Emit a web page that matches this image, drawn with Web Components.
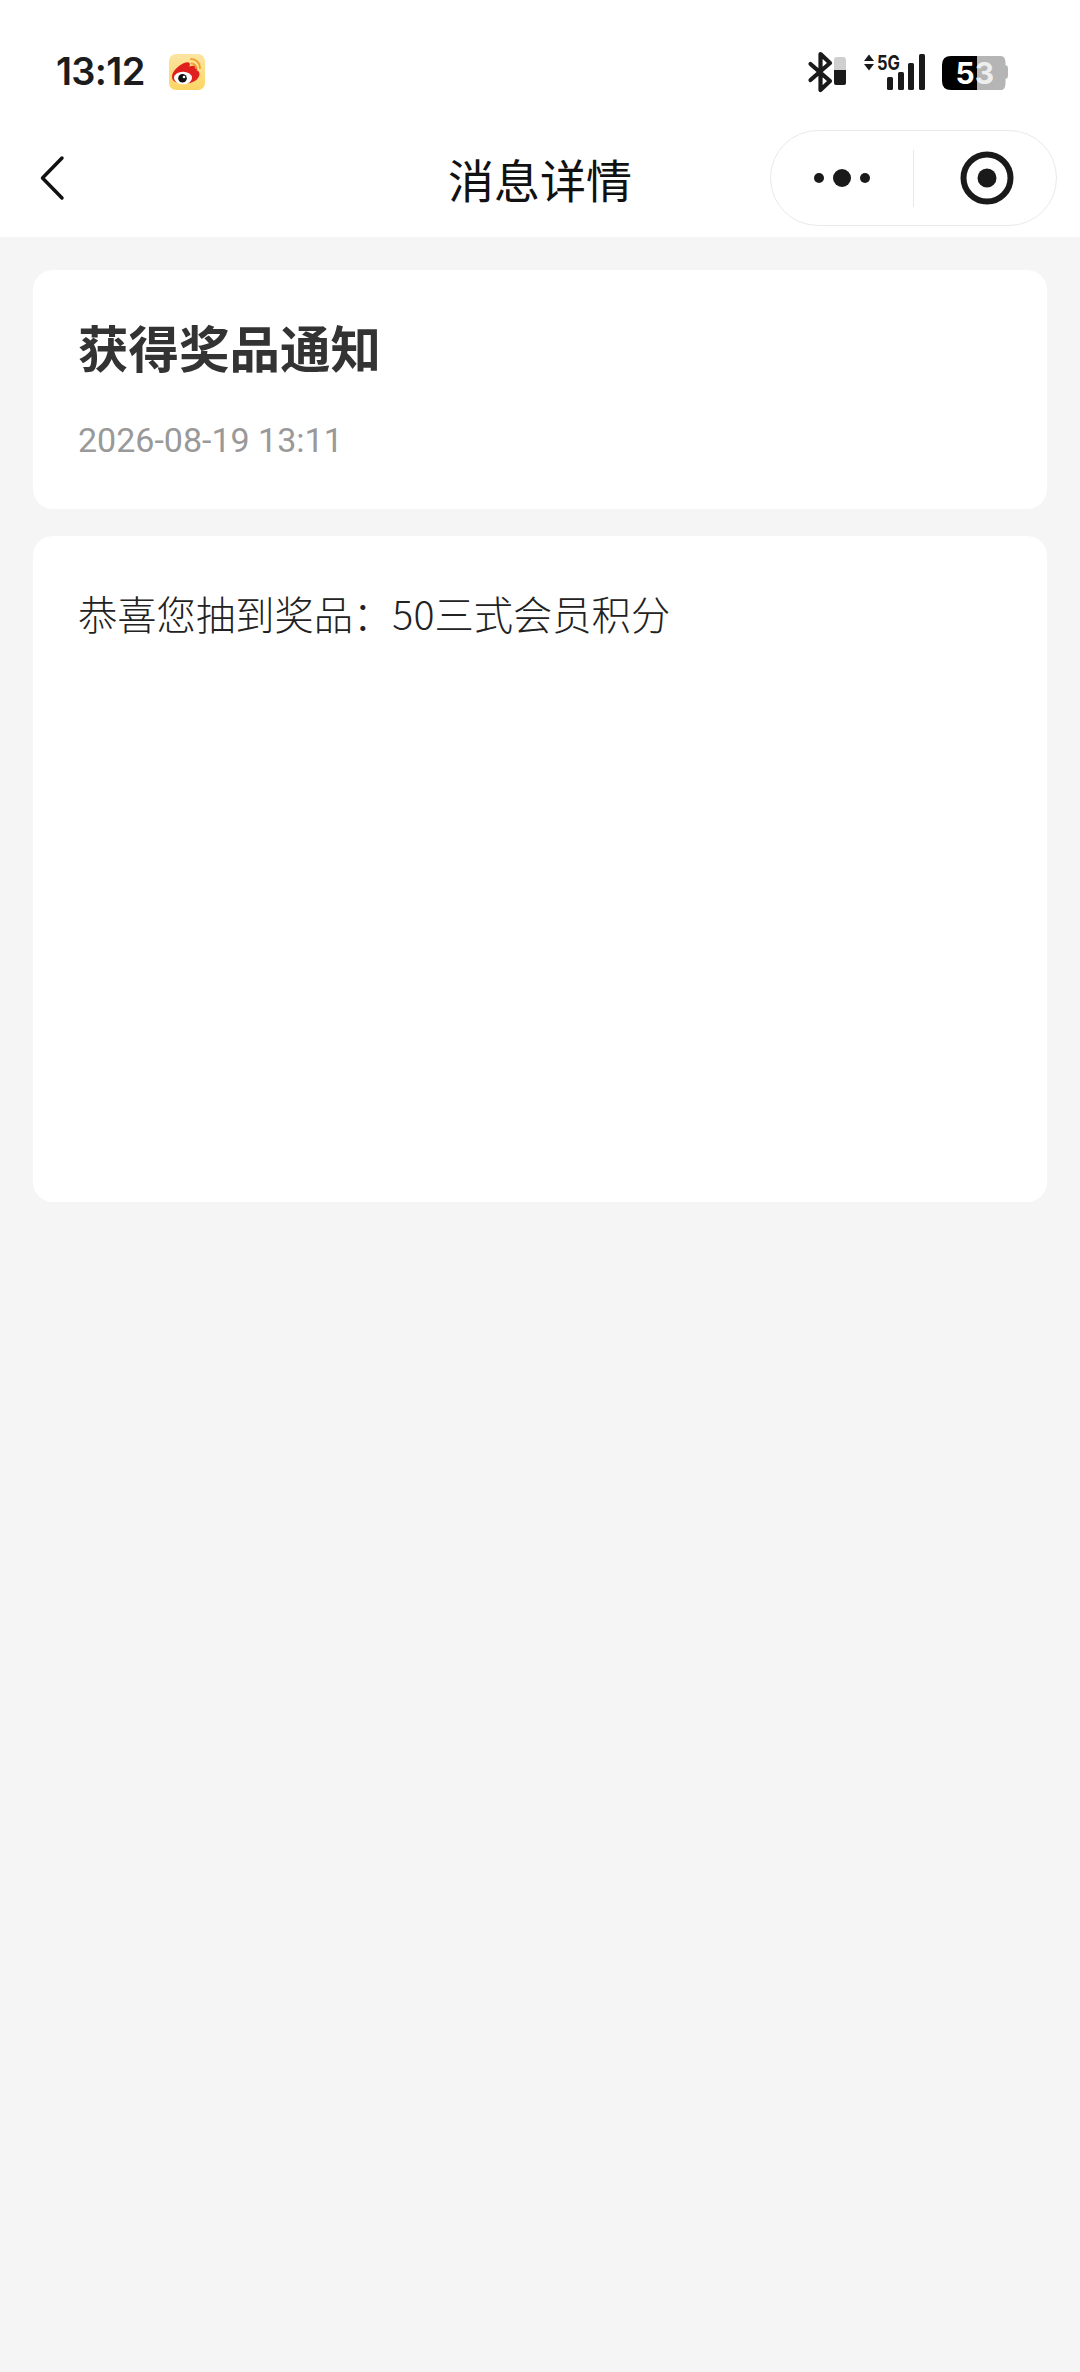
<!DOCTYPE html>
<html lang="zh"><head><meta charset="utf-8"><title>消息详情</title>
<style>
html,body{margin:0;padding:0;background:#f5f5f5;}
body{min-height:2372px;font-family:"Noto Sans CJK SC","Noto Sans",sans-serif;display:flex;flex-direction:column;}
</style></head><body>
<status-bar></status-bar>
<nav-bar>消息详情</nav-bar>
<page-main>
  <info-card style="--h:239px;--pt:44px">
    <notice-title>获得奖品通知</notice-title>
    <notice-date>2026-08-19 13:11</notice-date>
  </info-card>
  <info-card style="--h:666px;--pt:49px">
    <notice-body>恭喜您抽到奖品：50三式会员积分</notice-body>
  </info-card>
</page-main>
<script>
function def(name,html){
  customElements.define(name,class extends HTMLElement{
    constructor(){super();this.attachShadow({mode:'open'}).innerHTML=html;}
  });
}
def('status-bar',`<style>
:host{display:flex;position:relative;height:120px;background:#fff;box-sizing:border-box;align-items:flex-start;padding:50px 0 0 56px;}
.t{font:600 38px/46px Inter,"Liberation Sans",sans-serif;color:#1c1c1c;letter-spacing:-.7px;width:113px;margin-top:-2px}
svg{display:block}
.r{position:absolute;left:800px;top:50px}
</style>
<span class="t">13:12</span>
<svg width="36" height="36" viewBox="0 0 36 36" style="margin-top:4px">
<defs><linearGradient id="wb" x1="0" y1="0" x2="0" y2="1"><stop offset="0" stop-color="#fde5a2"/><stop offset="1" stop-color="#fbd563"/></linearGradient></defs>
<rect width="36" height="36" rx="7" fill="url(#wb)"/>
<path d="M3 23c0-4 3-8 7-11 4-3 9-5 10.500-3 .8 1.200.3 2.300-.2 3.500 3-1.200 6.700-1.200 7.700.8.600 1.200.1 2.200-.4 3 1.700.5 2.900 1.900 2.900 3.700 0 5-6.500 9.500-14 9.500S3 28 3 23z" fill="#e0201f"/>
<ellipse cx="14" cy="24" rx="9" ry="6.300" fill="#fff"/>
<circle cx="13.500" cy="24.200" r="4.300" fill="#111"/>
<circle cx="15" cy="23" r="1.300" fill="#fff"/>
<path d="M22 5c5 0 9 4 9 9M22.500 9.500c2.600 0 4.500 2 4.500 4.500" fill="none" stroke="#f0a030" stroke-width="2" stroke-linecap="round"/>
</svg>
<svg class="r" width="224" height="44" viewBox="0 0 224 44">
<path d="M10.500 14 30 31 20.500 40V4L30 13 10.500 30" fill="none" stroke="#1a1a1a" stroke-width="4.200" stroke-linecap="round" stroke-linejoin="round"/>
<path d="M34 10q0-3 3-3h6q3 0 3 3v10H34z" fill="#cfcfcf"/>
<path d="M34 20h12v13q0 2-2 2H36q-2 0-2-2z" fill="#1a1a1a"/>
<path d="M64 11l5-6.500 5 6.500zM64 14l5 6.500 5-6.500z" fill="#1a1a1a"/>
<text x="77" y="20" font-family="Inter,'Liberation Sans',sans-serif" font-weight="700" font-size="20" fill="#1a1a1a" textLength="23" lengthAdjust="spacingAndGlyphs">5G</text>
<rect x="87" y="27" width="6" height="13" rx="1.500" fill="#1a1a1a"/>
<rect x="98" y="22" width="6" height="18" rx="1.500" fill="#1a1a1a"/>
<rect x="108" y="13" width="6" height="27" rx="1.500" fill="#1a1a1a"/>
<rect x="119" y="4" width="6" height="36" rx="1.500" fill="#1a1a1a"/>
<path d="M177 6h24q4 0 4.500 6v3q2.500.5 2.500 3v8q0 2.500-2.500 3v5q-.5 6-4.500 6h-24z" fill="#b5b5b5"/>
<path d="M177 6h-26q-9 0-9 9v16q0 9 9 9h26z" fill="#000"/>
<text x="155.500" y="34" font-family="Inter,'Liberation Sans',sans-serif" font-weight="700" font-size="30" fill="#fff">5<tspan fill="#eee">3</tspan></text>
</svg>`);
def('nav-bar',`<style>
:host{display:flex;position:relative;height:117px;background:#fff;align-items:center;justify-content:center;box-sizing:border-box;}
.title{font:400 46px/60px "Noto Sans CJK SC",sans-serif;color:#111;margin-top:-2px}
.back{position:absolute;left:36px;top:35px}
.cap{position:absolute;left:770px;top:10px;width:287px;height:96px;box-sizing:border-box;border:1.500px solid #e9e9e9;border-radius:48px;display:flex}
.cap>div{display:flex;align-items:center;justify-content:center;flex:1 1 50%}
.cap>i{display:block;width:1.500px;height:57px;background:#e9e9e9;align-self:center}
svg{display:block}
</style>
<svg class="back" width="30" height="50" viewBox="0 0 30 50"><path d="M26 3 6.500 23 26 43" fill="none" stroke="#111" stroke-width="3.500" stroke-linecap="round" stroke-linejoin="round"/></svg>
<span class="title"><slot></slot></span>
<div class="cap">
<div><svg width="74" height="20" viewBox="0 0 74 20"><circle cx="14" cy="10" r="5" fill="#1a1a1a"/><circle cx="37" cy="10" r="9" fill="#1a1a1a"/><circle cx="60" cy="10" r="5" fill="#1a1a1a"/></svg></div>
<i></i>
<div><svg width="54" height="54" viewBox="0 0 54 54" style="margin-left:4px"><circle cx="27" cy="27" r="23.500" fill="none" stroke="#1a1a1a" stroke-width="6"/><circle cx="27" cy="27" r="9.500" fill="#1a1a1a"/></svg></div>
</div>`);
def('page-main',`<style>
:host{display:flex;flex-direction:column;gap:27px;padding:33px 33px 0;box-sizing:border-box;}
</style><slot></slot>`);
def('info-card',`<style>
:host{display:block;background:#fff;border-radius:20px;height:var(--h);padding:var(--pt) 46px 0 45px;box-sizing:border-box;}
</style><slot></slot>`);
def('notice-title',`<style>
:host{display:block;font:700 50.500px/64px "Noto Sans CJK SC",sans-serif;color:#333;}
</style><slot></slot>`);
def('notice-date',`<style>
:host{display:block;font:400 34px/44px Roboto,"Noto Sans",sans-serif;color:#999;margin-top:40px;}
</style><slot></slot>`);
def('notice-body',`<style>
:host{display:block;font:300 39.300px/56px "Noto Sans CJK SC",sans-serif;color:#222;}
</style><slot></slot>`);
</script>
</body></html>
